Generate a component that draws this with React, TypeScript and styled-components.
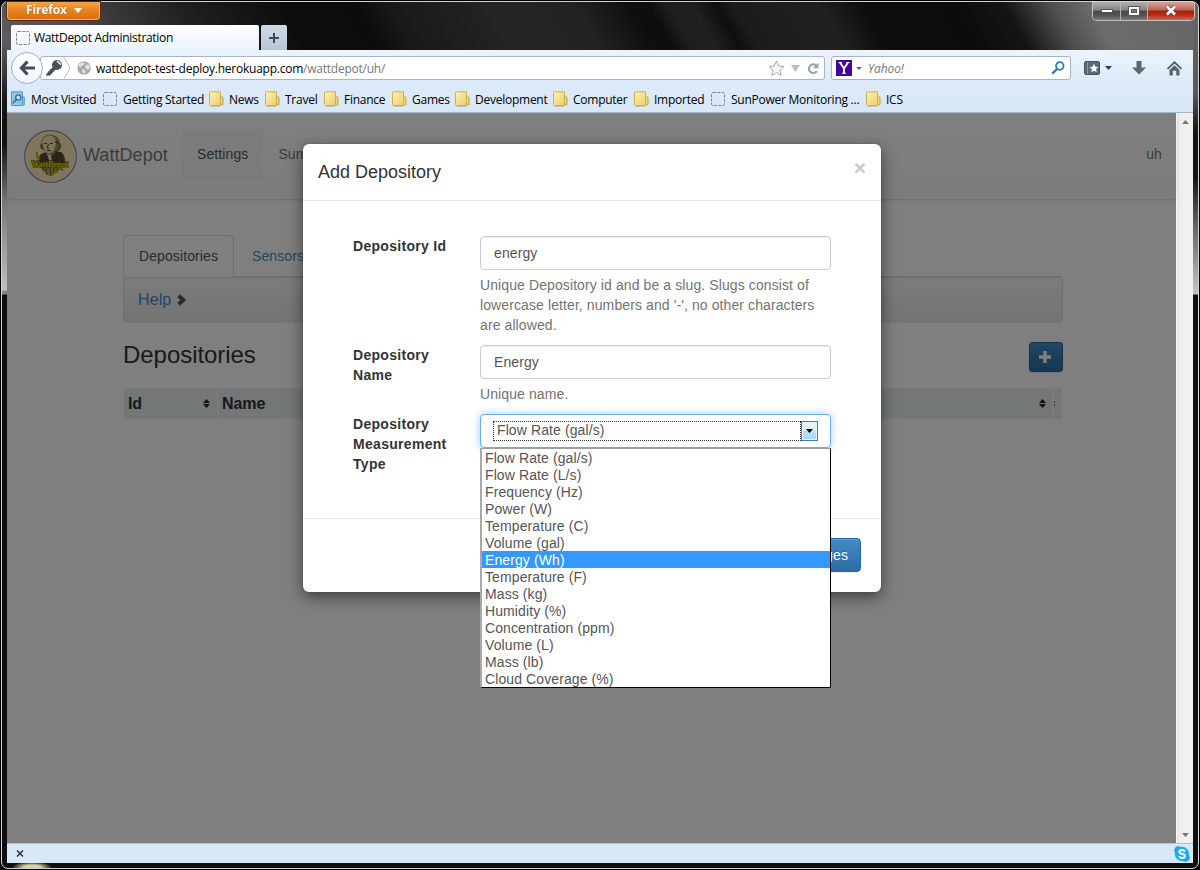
import React from 'react';
import styled, { createGlobalStyle, css } from 'styled-components';

const GlobalStyle = createGlobalStyle`
  *, *::before, *::after { box-sizing: border-box; }
  html, body { margin: 0; padding: 0; background: #000; }
  body { overflow: hidden; }
  svg { display: block; flex: none; }
`;

const uiFont = css`
  font-family: 'Open Sans', 'Noto Sans', sans-serif;
  font-size: 12px;
  line-height: 16px;
  white-space: pre;
`;

/* ---------- window frame ---------- */

const WindowFrame = styled.div`
  width: 1200px;
  height: 870px;
  padding: 1px;
  background: #000;
`;

const Glass = styled.div`
  width: 1198px;
  height: 868px;
  border: 1px solid #d4d4d4;
  border-radius: 7px;
  padding: 0 5px;
  display: flex;
  flex-direction: column;
  background:
    radial-gradient(ellipse 20px 5px at 30px 865px, #d8d2a6 0 40%, transparent 100%),
    linear-gradient(180deg, #555 0, #5e5e5e 40px, #161616 100px, #111 140px, #555 180px, #777 200px, #c0c0c0 288px, #8a8a8a 289px 292px, transparent 293px) 0 0 / 5px 100% no-repeat,
    linear-gradient(180deg, #666 0, #5a5a5a 90px, #151515 130px, #151515 175px, #666 225px, #c4c4c4 292px, transparent 293px) 100% 0 / 5px 100% no-repeat,
    linear-gradient(60deg, #5c5c5c 0, #505050 7%, #3a3a3a 10.5%, #1f1f1f 17%, #0d0d0d 25%, #0c0c0c 31%, #191919 34%, #242424 42%, #222 49%, #0e0e0e 53.5%, #0e0e0e 55%, #1e1e1e 56.5%, #202020 58.5%, #0f0f0f 60.5%, #1c1c1c 62%, #202020 69%, #0d0d0d 72.5%, #0c0c0c 80%, #141414 84%, #505050 88%, #6c6c6c 91%, #666 100%) 0 0 / 100% 50px no-repeat;
  background-color: #0f0f0f;
`;

const Body = styled.div`
  height: 861px;
  display: flex;
  flex-direction: column;
`;

const TitleBar = styled.div`
  height: 23px;
  display: flex;
  justify-content: space-between;
  align-items: flex-start;
`;

const FirefoxButton = styled.div`
  ${uiFont}
  width: 93px;
  height: 18px;
  display: flex;
  align-items: center;
  padding-left: 18px;
  padding-bottom: 1px;
  gap: 7px;
  font-weight: 700;
  letter-spacing: -0.15px;
  color: #fff;
  text-shadow: 0 0 1px #7a3a00;
  background: linear-gradient(#f6a444, #e5831f 50%, #da7010);
  border: 1px solid #f5b56e;
  border-top: 0;
  border-radius: 0 0 4px 4px;
  box-shadow: 0 0 0 1px #55290a;
`;

const WindowButtons = styled.div`
  display: flex;
  height: 19px;
  width: 103px;
  margin-right: -2px;
  border: 1px solid #c2c2c2;
  border-top: 0;
  border-radius: 0 0 5px 5px;
  overflow: hidden;
`;

const WindowButton = styled.div<{ $w: number; $danger?: boolean }>`
  width: ${p => p.$w}px;
  display: flex;
  align-items: center;
  justify-content: center;
  padding-bottom: 1px;
  border-right: ${p => (p.$danger ? '0' : '1px solid #b4b4b4')};
  background: ${p =>
    p.$danger
      ? 'linear-gradient(#d5a49b, #c26353 45%, #a51d09 50%, #b8331d 75%, #d0684c)'
      : 'linear-gradient(#b0b0b0, #858585 45%, #484848 50%, #555 75%, #7b7b7b)'};
`;

const TabStrip = styled.div`
  height: 25px;
  display: flex;
  align-items: stretch;
  gap: 2px;
  padding-left: 4px;
`;

const Tab = styled.div`
  ${uiFont}
  width: 248px;
  display: flex;
  align-items: center;
  gap: 4px;
  padding-left: 5px;
  color: #000;
  letter-spacing: -0.32px;
  background: linear-gradient(#fdfeff, #ebf4fd);
  border-radius: 2px 2px 0 0;
`;

const NewTab = styled.div`
  width: 26px;
  display: flex;
  align-items: center;
  justify-content: center;
  background: linear-gradient(#cfdbe7, #b8c6d5);
  border-radius: 2px 2px 0 0;
`;

/* ---------- toolbars ---------- */

const Toolbars = styled.div`
  height: 63px;
  background: linear-gradient(#ebf4fd, #dbe9f8 60%, #d9e8f7);
  border-bottom: 1px solid #a4b9d2;
`;

const NavRow = styled.div`
  height: 36px;
  display: flex;
  align-items: center;
  padding-left: 4px;
`;

const BackButton = styled.div`
  position: relative;
  width: 32px;
  height: 32px;
  border-radius: 50%;
  border: 1px solid #9fb0c3;
  background: linear-gradient(#fff, #f0f5fb);
  display: flex;
  align-items: center;
  justify-content: center;
`;

const Field = styled.div<{ $w: number; $ml: number; $pl: number }>`
  ${uiFont}
  width: ${p => p.$w}px;
  height: 24px;
  margin-left: ${p => p.$ml}px;
  padding-left: ${p => p.$pl}px;
  display: flex;
  align-items: center;
  background: #fff;
  border: 1px solid #a3b5c9;
  border-radius: 3px;
  letter-spacing: -0.24px;
`;

const UrlText = styled.div`
  width: 672px;
  margin-left: 5px;
  padding-top: 2px;
  color: #777;
  b { font-weight: 400; color: #000; }
`;

const SearchText = styled.div`
  width: 183px;
  margin-left: 6px;
  padding-top: 2px;
  font-style: italic;
  letter-spacing: -0.1px;
  color: #777;
`;

const Spacer = styled.div<{ $w: number }>`
  width: ${p => p.$w}px;
`;

const ToolIcons = styled.div`
  display: flex;
  align-items: center;
  margin-left: 13px;
`;

const ToolIcon = styled.div<{ $w: number }>`
  width: ${p => p.$w}px;
  display: flex;
  align-items: center;
  gap: 4px;
`;

const Bookmarks = styled.div`
  display: flex;
  height: 26px;
  align-items: center;
  padding-left: 4px;
`;

const Bookmark = styled.div<{ $w: number; $ls?: number }>`
  ${uiFont}
  width: ${p => p.$w}px;
  display: flex;
  align-items: center;
  color: #000;
  letter-spacing: ${p => p.$ls ?? -0.25}px;
  span { padding-top: 2px; }
`;

const BookmarkIcon = styled.div`
  width: 20px;
`;

/* ---------- page ---------- */

const Viewport = styled.div`
  height: 730px;
  display: flex;
`;

const Page = styled.div`
  position: relative;
  width: 1169px;
  height: 730px;
  background: #fff;
  color: #333;
  font: 14px/20px 'Liberation Sans', Arial, sans-serif;
  letter-spacing: 0.1px;
`;

const SiteNav = styled.div`
  height: 87px;
  display: flex;
  align-items: flex-start;
  padding: 16px 14px 0 17px;
  background: linear-gradient(#fff, #f8f8f8);
  border-bottom: 1px solid #e2e2e2;
  border-radius: 4px;
  box-shadow: 0 1px 5px rgba(0, 0, 0, 0.075);
`;

const Brand = styled.div`
  display: flex;
  align-items: center;
  width: 158px;
  gap: 6px;
  height: 53px;
  margin-top: 1px;
  font-size: 18px;
  letter-spacing: 0.05px;
  color: #777;
  span { padding-bottom: 3px; }
`;

const SiteLink = styled.div<{ $active?: boolean }>`
  height: 50px;
  padding: 15px;
  color: ${p => (p.$active ? '#555' : '#777')};
  background: ${p => (p.$active ? 'linear-gradient(#f8f8f8, #f5f5f5)' : 'transparent')};
`;

const UserLink = styled.div`
  margin-left: auto;
  padding: 15px 0;
  color: #777;
`;

const Container = styled.div`
  width: 940px;
  margin: 35px 0 0 116px;
`;

const Tabs = styled.div`
  display: flex;
  gap: 2px;
  height: 42px;
  border-bottom: 1px solid #ddd;
`;

const PageTab = styled.div<{ $active?: boolean }>`
  height: 42px;
  padding: 10px 15px;
  border: 1px solid ${p => (p.$active ? '#ddd' : 'transparent')};
  border-bottom: 0;
  border-radius: 4px 4px 0 0;
  color: ${p => (p.$active ? '#555' : '#428bca')};
  background: ${p => (p.$active ? '#fff' : 'transparent')};
`;

const HelpPanel = styled.div`
  height: 45px;
  display: flex;
  align-items: center;
  gap: 6px;
  padding-left: 14px;
  font-size: 16px;
  color: #428bca;
  border: 1px solid #ddd;
  border-radius: 4px;
  background: linear-gradient(#f7f7f7, #e8e8e8);
  box-shadow: 0 1px 2px rgba(0, 0, 0, 0.05);
`;

const HeadingRow = styled.div`
  display: flex;
  justify-content: space-between;
  margin-top: 20px;
  height: 30px;
`;

const Heading = styled.div`
  font-size: 24px;
  line-height: 26px;
  letter-spacing: -0.05px;
`;

const AddButton = styled.div`
  width: 34px;
  height: 30px;
  display: flex;
  align-items: center;
  justify-content: center;
  padding-right: 2px;
  border: 1px solid #2b669a;
  border-radius: 3px;
  background: linear-gradient(#428bca, #2d6ca2);
  box-shadow: 0 1px 1px rgba(0, 0, 0, 0.1);
`;

const TableHead = styled.div`
  display: grid;
  grid-template-columns: 93px 835px 8px;
  gap: 1px;
  margin: 16px 0 0 1px;
`;

const HeadCell = styled.div`
  height: 31px;
  display: flex;
  align-items: center;
  justify-content: space-between;
  padding: 0 7px 0 4px;
  font-size: 16px;
  letter-spacing: -0.1px;
  font-weight: 700;
  background: #e6eeee;
  overflow: hidden;
`;

const NarrowCell = styled(HeadCell)`
  padding: 0;
`;

const Backdrop = styled.div`
  position: absolute;
  inset: 0;
  background: rgba(0, 0, 0, 0.5);
`;

/* ---------- dialog ---------- */

const Dialog = styled.div`
  position: absolute;
  left: 296px;
  top: 31px;
  width: 578px;
  height: 448px;
  background: #fff;
  border-radius: 6px;
  box-shadow: 0 5px 15px rgba(0, 0, 0, 0.5), 0 0 1px rgba(0, 0, 0, 0.5);
`;

const DialogHeader = styled.div`
  height: 57px;
  display: flex;
  align-items: center;
  justify-content: space-between;
  padding: 0 15px;
  font-size: 18px;
  letter-spacing: 0;
  border-bottom: 1px solid #e5e5e5;
`;

const CloseMark = styled.div`
  font-size: 21px;
  font-weight: 700;
  line-height: 20px;
  color: #c8c8c8;
  padding-bottom: 8px;
`;

const Form = styled.div`
  height: 317px;
  padding: 35px 50px 0;
`;

const FormRow = styled.div`
  display: grid;
  grid-template-columns: 127px 351px;
  margin-bottom: 10px;
`;

const Label = styled.div`
  font-weight: 700;
  letter-spacing: 0.3px;
  width: 112px;
`;

const Input = styled.div<{ $focus?: boolean }>`
  height: 34px;
  padding: 6px 12px;
  color: #555;
  border: 1px solid ${p => (p.$focus ? '#66afe9' : '#ccc')};
  border-radius: 4px;
  box-shadow: ${p =>
    p.$focus
      ? '0 0 8px rgba(102, 175, 233, 0.6)'
      : 'inset 0 1px 1px rgba(0, 0, 0, 0.075)'};
  background: #fff;
`;

const InputText = styled.div`
  padding: 0 1px;
`;

const SelectFace = styled.div`
  display: flex;
  height: 20px;
`;

const SelectValue = styled.div`
  width: 308px;
  height: 20px;
  padding-left: 3px;
  line-height: 17px;
  border: 1px dotted #333;
`;

const SelectArrow = styled.div`
  width: 17px;
  height: 20px;
  display: flex;
  align-items: center;
  justify-content: center;
  border: 1px solid #3c7fb1;
  box-shadow: inset 0 0 0 1px #e8f6fd;
  background: linear-gradient(#e3f4fc, #d6eefb 50%, #b5e0f7 52%, #a7d9f5);
`;

const HelpText = styled.div`
  margin-top: 5px;
  color: #737373;
`;

const DialogFooter = styled.div`
  height: 74px;
  display: flex;
  justify-content: flex-end;
  padding: 19px 20px 0;
  border-top: 1px solid #e5e5e5;
`;

const SaveButton = styled.div`
  height: 34px;
  padding: 6px 12px;
  color: #fff;
  border: 1px solid #2b669a;
  border-radius: 4px;
  background: linear-gradient(#428bca, #2d6ca2);
  box-shadow: inset 0 1px 0 rgba(255, 255, 255, 0.15), 0 1px 1px rgba(0, 0, 0, 0.075);
  text-shadow: 0 -1px 0 rgba(0, 0, 0, 0.2);
`;

const OptionList = styled.div`
  position: absolute;
  left: 177px;
  top: 304px;
  width: 351px;
  border: 1px solid #000;
  border-left: 2px solid #a9a9a9;
  border-top-color: #a0a0a0;
  background: #fff;
`;

const Option = styled.div<{ $selected?: boolean }>`
  height: 17px;
  line-height: 18px;
  padding-left: 3px;
  color: ${p => (p.$selected ? '#fff' : '#555')};
  background: ${p => (p.$selected ? '#3399ff' : '#fff')};
`;

/* ---------- scrollbar and add-on bar ---------- */

const Scrollbar = styled.div`
  width: 17px;
  display: flex;
  flex-direction: column;
  align-items: center;
  justify-content: space-between;
  padding: 7px 0 6px;
  border-left: 1px solid #fafafa;
  background: linear-gradient(90deg, #e4e4e4, #efefef 3px, #f0f0f0);
`;

const AddonBar = styled.div`
  height: 20px;
  display: flex;
  align-items: center;
  justify-content: space-between;
  padding: 0 3px 0 9px;
  background: #d9e8f7;
  border-top: 1px solid #b2c1d2;
`;

/* ---------- drawings ---------- */

const Caret = ({ w, h, fill, up }: { w: number; h: number; fill: string; up?: boolean }) => (
  <svg width={w} height={h} viewBox="0 0 10 10" preserveAspectRatio="none">
    <path d={up ? 'M0 10L5 0l5 10z' : 'M0 0h10L5 10z'} fill={fill} />
  </svg>
);

const BlankIcon = () => (
  <svg width="14" height="14" viewBox="0 0 14 14">
    <rect x=".5" y=".5" width="13" height="13" rx="1.5" fill="none" stroke="#7c8288" strokeDasharray="3 1.3" />
  </svg>
);

const FolderIcon = () => (
  <svg width="15" height="16" viewBox="0 0 15 16">
    <defs>
      <linearGradient id="folder" x1="0" y1="0" x2="1" y2="1">
        <stop offset="0" stopColor="#fdf3b4" />
        <stop offset="1" stopColor="#e9cf69" />
      </linearGradient>
    </defs>
    <path d="M10 6h3.2q.8 0 .8.8v6.2q0 1-1 1h-3z" fill="#efd977" stroke="#c3a136" />
    <path d="M1.5.8h10v12.7q0 1-1 1h-9q-1 0-1-1V1.800q0-1 1-1z" fill="url(#folder)" stroke="#cdb055" />
    <path d="M2 15.300h9" stroke="#9fa8a8" strokeWidth=".7" />
  </svg>
);

const VisitedIcon = () => (
  <svg width="15" height="16" viewBox="0 0 15 16">
    <path d="M10 6h3.200v8H10z" fill="#9fd0ec" stroke="#4a90bd" />
    <path d="M.5.800h11v13.700H.5z" fill="#8fc6e6" stroke="#5a9cc6" />
    <circle cx="7.300" cy="6.500" r="2.600" fill="#b9dff3" stroke="#2f6c98" strokeWidth="1.300" />
    <path d="M5.300 8.500l-3 3.200" stroke="#2f6c98" strokeWidth="1.600" strokeLinecap="round" />
  </svg>
);

const BackArrow = () => (
  <svg width="17" height="16" viewBox="0 0 17 16">
    <path d="M8.500 1.500L2.500 8l6 6.500M3 8H16" fill="none" stroke="#414d5a" strokeWidth="3.200" />
  </svg>
);

const KeyIcon = () => (
  <svg width="18" height="18" viewBox="0 0 18 18">
    <path d="M9.500 6.500l2.500 2.500L5 16.500l-3.500.3L1 15l1.500-.8.300-1.800 1.800-.4.200-1.800 1.600-.4z" fill="#4a5058" />
    <circle cx="12" cy="6" r="5" fill="#4a5058" />
    <path d="M12.500 2.300l3 2.800" stroke="#e8ebee" strokeWidth="1.600" strokeLinecap="round" />
  </svg>
);

const IdentityEdge = () => (
  <svg width="8" height="22" viewBox="0 0 8 22">
    <path d="M1 0l6 11-6 11" fill="none" stroke="#b8bfc7" />
  </svg>
);

const GlobeIcon = () => (
  <svg width="14" height="14" viewBox="0 0 14 14">
    <circle cx="7" cy="7" r="6.700" fill="#a8a8a8" />
    <path d="M2 3l3-1.500 3 .3-1 2-2 .7-1 2-2-.5zM8 5l3-2 2 3-1 2-2 .5-1.500-1.500zM5 8l3 1 .5 1.500L7 13l-1.500-1.500z" fill="#e2e2e2" />
  </svg>
);

const StarIcon = () => (
  <svg width="17" height="17" viewBox="0 0 17 17">
    <path d="M8.500 1l2.200 5 5.300.5-4 3.600 1.200 5.400-4.700-2.900-4.700 2.900L5 10.100 1 6.500 6.300 6z" fill="#fafafa" stroke="#a6a9ad" />
  </svg>
);

const ReloadIcon = () => (
  <svg width="12" height="13" viewBox="0 0 12 13">
    <path d="M9.800 9.200A4.300 4.300 0 1 1 9 3.400" fill="none" stroke="#98a3ae" strokeWidth="2.200" />
    <path d="M11.500.5v5.800H5.800z" fill="#98a3ae" />
  </svg>
);

const YahooIcon = () => (
  <svg width="16" height="16" viewBox="0 0 16 16">
    <rect width="16" height="16" fill="#45059c" />
    <path d="M4 2.500l4 6 4-6M8 8v5.500" fill="none" stroke="#fff" strokeWidth="1.900" />
    <path d="M2.500 2.500h3.500M10.500 2.500h3M6 13.300h4" stroke="#fff" strokeWidth="1.100" />
  </svg>
);

const SearchIcon = () => (
  <svg width="14" height="14" viewBox="0 0 14 14">
    <circle cx="8.800" cy="5" r="3.800" fill="none" stroke="#2f76b5" strokeWidth="1.700" />
    <path d="M6 8l-4.800 4.800" stroke="#2f76b5" strokeWidth="2.300" />
  </svg>
);

const LibraryIcon = () => (
  <svg width="17" height="14" viewBox="0 0 17 14">
    <rect x=".5" y=".5" width="15" height="13" rx="1.500" fill="#5f6a77" stroke="#48525e" />
    <path d="M3.500 1v12" stroke="#8a95a1" />
    <path d="M10 2.800l1.300 2.900 3.100.3-2.300 2.100.6 3.200-2.700-1.600-2.700 1.600.6-3.200L5.600 6l3.100-.3z" fill="#fff" />
  </svg>
);

const DownloadIcon = () => (
  <svg width="14" height="14" viewBox="0 0 14 14">
    <path d="M4.500 0h5v6.500H14l-7 7L0 6.500h4.500z" fill="#5b6673" />
  </svg>
);

const HomeIcon = () => (
  <svg width="15" height="15" viewBox="0 0 15 15">
    <path d="M.5 8L7.500 1.300 14.500 8" fill="none" stroke="#505a66" strokeWidth="1.700" />
    <path d="M7.500 4.300l5 4.600V14.500H9.200V9.700H5.800v4.800H2.500V8.900z" fill="#5a6470" />
  </svg>
);

const PlusIcon = ({ size, color, thick }: { size: number; color: string; thick: number }) => (
  <svg width={size} height={size} viewBox={`0 0 ${size} ${size}`}>
    <path d={`M${size / 2} 0v${size}M0 ${size / 2}h${size}`} stroke={color} strokeWidth={thick} />
  </svg>
);

const ChevronIcon = () => (
  <svg width="10" height="12" viewBox="0 0 10 12">
    <path d="M1.700 1.700L6.200 6l-4.500 4.300" fill="none" stroke="#555" strokeWidth="4" />
  </svg>
);

const SortIcon = () => (
  <svg width="7" height="9" viewBox="0 0 7 9">
    <path d="M0 4L3.500 0 7 4zM0 5h7L3.500 9z" fill="#222" />
  </svg>
);

const SortSliver = () => (
  <svg width="2" height="5" viewBox="0 0 2 5">
    <path d="M0 1h1M0 4h1" stroke="#111" />
  </svg>
);

const LogoCaption = styled.text`
  font: bold 7.6px 'Liberation Serif', serif;
  letter-spacing: 0.15px;
`;

const LogoIcon = () => (
  <svg width="53" height="53" viewBox="0 0 53 53">
    <circle cx="26.500" cy="26.500" r="25.800" fill="#fdebb4" stroke="#85879c" strokeWidth="1.200" />
    <circle cx="26.500" cy="26.500" r="24.600" fill="none" stroke="#fffaf0" strokeWidth=".8" />
    <path d="M15 33q-1-8 4-10l4-1 3 3 5-4 6 1q4 2 4 11z" fill="#54482c" />
    <path d="M18 35h20l-3 4-3 4-6 3-5-3-4-5z" fill="#b9a672" />
    <path d="M17 13q1-8 9-8.500 8 .500 9.500 7l1 4-2 4-3 1-1 3-4 3-4-2-2-4-2-1z" fill="#a08f60" />
    <path d="M18 13q1-7 7-7.500 7 0 7 8l-2 7-4 3-4-1-2-4z" fill="#f7e4ae" />
    <path d="M20 13.500h3M26 13.500h3M24.500 14l-1.200 4 1.700.5M23 20.500h4" fill="none" stroke="#4c4022" strokeWidth="1" />
    <path d="M31 12q4 0 5 3t-2 5l-3 2M17.500 14q-1 3 1 5" fill="none" stroke="#5d5030" strokeWidth="1.300" />
    <path d="M23 24l4 1 1 7-3-2z" fill="#f4e5b2" />
    <path d="M18 37l2 4M22 38l1 7M26 38l1 8M30 38l-1 6M36 36l3 5M17 24l-2 6M38 24l3 8" stroke="#6d5e36" strokeWidth="1.100" />
    <path d="M12.500 22l1 6 2 1-1 3M34 39l-1 3h-4l1 2" fill="none" stroke="#b3a400" strokeWidth="1.700" />
    <LogoCaption x="7.500" y="37" fill="#f0dc00" stroke="#6a5d00" strokeWidth="1.300" paintOrder="stroke">WattDepot</LogoCaption>
  </svg>
);

const SkypeIcon = () => (
  <svg width="16" height="16" viewBox="0 0 16 16">
    <circle cx="4.500" cy="4.500" r="4.300" fill="#12a5e8" />
    <circle cx="11.500" cy="11.500" r="4.300" fill="#12a5e8" />
    <circle cx="8" cy="8" r="7.200" fill="#1cb0f2" />
    <path d="M10.800 5.500Q9.800 4 8 4 5.400 4 5.400 5.900q0 1.400 2.600 1.900 2.900.5 2.900 2.200Q10.800 12 8.100 12 6 12 5.100 10.400" fill="none" stroke="#fff" strokeWidth="1.900" />
  </svg>
);

const MinIcon = () => (
  <svg width="12" height="4" viewBox="0 0 12 4">
    <rect x=".5" y=".5" width="11" height="3" fill="#fff" stroke="#51515f" />
  </svg>
);
const MaxIcon = () => (
  <svg width="12" height="10" viewBox="0 0 12 10">
    <path d="M.5.500h11v9H.5z" fill="#fff" stroke="#51515f" />
    <rect x="3.500" y="3.500" width="5" height="3" fill="#777" stroke="#51515f" />
  </svg>
);
const ExitIcon = () => (
  <svg width="12" height="11" viewBox="0 0 12 11">
    <path d="M2 1.500l8 8M10 1.500l-8 8" stroke="#5a4a55" strokeWidth="4.200" />
    <path d="M2 1.500l8 8M10 1.500l-8 8" stroke="#fff" strokeWidth="2.500" />
  </svg>
);

const SmallCross = () => (
  <svg width="8" height="7" viewBox="0 0 8 7">
    <path d="M1 .5l6 6M7 .5l-6 6" stroke="#333" strokeWidth="1.500" />
  </svg>
);

/* ---------- data ---------- */

const bookmarks = [
  { label: 'Most Visited', width: 92, icon: 'visited' },
  { label: 'Getting Started', width: 106, icon: 'blank' },
  { label: 'News', width: 56, icon: 'folder' },
  { label: 'Travel', width: 59, icon: 'folder' },
  { label: 'Finance', width: 68, icon: 'folder' },
  { label: 'Games', width: 63, icon: 'folder' },
  { label: 'Development', width: 98, icon: 'folder' },
  { label: 'Computer', width: 81, icon: 'folder' },
  { label: 'Imported', width: 77, icon: 'folder' },
  { label: 'SunPower Monitoring ...', width: 155, icon: 'blank' },
  { label: 'ICS', width: 60, icon: 'folder' },
];

const icons: Record<string, React.ReactElement> = {
  visited: <VisitedIcon />,
  blank: <BlankIcon />,
  folder: <FolderIcon />,
};

const options = [
  'Flow Rate (gal/s)',
  'Flow Rate (L/s)',
  'Frequency (Hz)',
  'Power (W)',
  'Temperature (C)',
  'Volume (gal)',
  'Energy (Wh)',
  'Temperature (F)',
  'Mass (kg)',
  'Humidity (%)',
  'Concentration (ppm)',
  'Volume (L)',
  'Mass (lb)',
  'Cloud Coverage (%)',
];

export default function App() {
  return (
    <WindowFrame>
      <GlobalStyle />
      <Glass>
        <Body>
          <TitleBar>
            <FirefoxButton>
              Firefox
              <Caret w={8} h={5} fill="#fff" />
            </FirefoxButton>
            <WindowButtons>
              <WindowButton $w={28}><MinIcon /></WindowButton>
              <WindowButton $w={27}><MaxIcon /></WindowButton>
              <WindowButton $w={46} $danger><ExitIcon /></WindowButton>
            </WindowButtons>
          </TitleBar>
          <TabStrip>
            <Tab><BlankIcon />WattDepot Administration</Tab>
            <NewTab><PlusIcon size={10} color="#3e4854" thick={2} /></NewTab>
          </TabStrip>
          <Toolbars>
            <NavRow>
              <BackButton><BackArrow /></BackButton>
              <Field $w={785} $ml={-3} $pl={4}>
                <KeyIcon />
                <IdentityEdge />
                <Spacer $w={6} />
                <GlobeIcon />
                <UrlText><b>wattdepot-test-deploy.herokuapp.com</b>/wattdepot/uh/</UrlText>
                <StarIcon />
                <Spacer $w={6} />
                <Caret w={9} h={7} fill="#b8bec6" />
                <Spacer $w={7} />
                <ReloadIcon />
              </Field>
              <Field $w={240} $ml={6} $pl={4}>
                <YahooIcon />
                <Spacer $w={4} />
                <Caret w={6} h={3} fill="#666" />
                <SearchText>Yahoo!</SearchText>
                <SearchIcon />
              </Field>
              <ToolIcons>
                <ToolIcon $w={48}><LibraryIcon /><Caret w={7} h={4} fill="#333c46" /></ToolIcon>
                <ToolIcon $w={35}><DownloadIcon /></ToolIcon>
                <ToolIcon $w={16}><HomeIcon /></ToolIcon>
              </ToolIcons>
            </NavRow>
            <Bookmarks>
              {bookmarks.map(b => (
                <Bookmark key={b.label} $w={b.width}>
                  <BookmarkIcon>{icons[b.icon]}</BookmarkIcon>
                  <span>{b.label}</span>
                </Bookmark>
              ))}
            </Bookmarks>
          </Toolbars>
          <Viewport>
            <Page>
              <SiteNav>
                <Brand><LogoIcon /><span>WattDepot</span></Brand>
                <SiteLink $active>Settings</SiteLink>
                <SiteLink>Summary</SiteLink>
                <UserLink>uh</UserLink>
              </SiteNav>
              <Container>
                <Tabs>
                  <PageTab $active>Depositories</PageTab>
                  <PageTab>Sensors</PageTab>
                </Tabs>
                <HelpPanel>Help<ChevronIcon /></HelpPanel>
                <HeadingRow>
                  <Heading>Depositories</Heading>
                  <AddButton><PlusIcon size={12} color="#fff" thick={3.4} /></AddButton>
                </HeadingRow>
                <TableHead>
                  <HeadCell>Id<SortIcon /></HeadCell>
                  <HeadCell>Name<SortIcon /></HeadCell>
                  <NarrowCell><SortSliver /></NarrowCell>
                </TableHead>
              </Container>
              <Backdrop />
              <Dialog>
                <DialogHeader>Add Depository<CloseMark>×</CloseMark></DialogHeader>
                <Form>
                  <FormRow>
                    <Label>Depository Id</Label>
                    <div>
                      <Input><InputText>energy</InputText></Input>
                      <HelpText>Unique Depository id and be a slug. Slugs consist of lowercase letter, numbers and '-', no other characters are allowed.</HelpText>
                    </div>
                  </FormRow>
                  <FormRow>
                    <Label>Depository Name</Label>
                    <div>
                      <Input><InputText>Energy</InputText></Input>
                      <HelpText>Unique name.</HelpText>
                    </div>
                  </FormRow>
                  <FormRow>
                    <Label>Depository Measurement Type</Label>
                    <Input $focus>
                      <SelectFace>
                        <SelectValue>Flow Rate (gal/s)</SelectValue>
                        <SelectArrow><Caret w={7} h={4} fill="#000" /></SelectArrow>
                      </SelectFace>
                    </Input>
                  </FormRow>
                </Form>
                <DialogFooter>
                  <SaveButton>Save changes</SaveButton>
                </DialogFooter>
                <OptionList>
                  {options.map(o => (
                    <Option key={o} $selected={o === 'Energy (Wh)'}>{o}</Option>
                  ))}
                </OptionList>
              </Dialog>
            </Page>
            <Scrollbar>
              <Caret w={7} h={4} fill="#777" up />
              <Caret w={7} h={4} fill="#777" />
            </Scrollbar>
          </Viewport>
          <AddonBar><SmallCross /><SkypeIcon /></AddonBar>
        </Body>
      </Glass>
    </WindowFrame>
  );
}
